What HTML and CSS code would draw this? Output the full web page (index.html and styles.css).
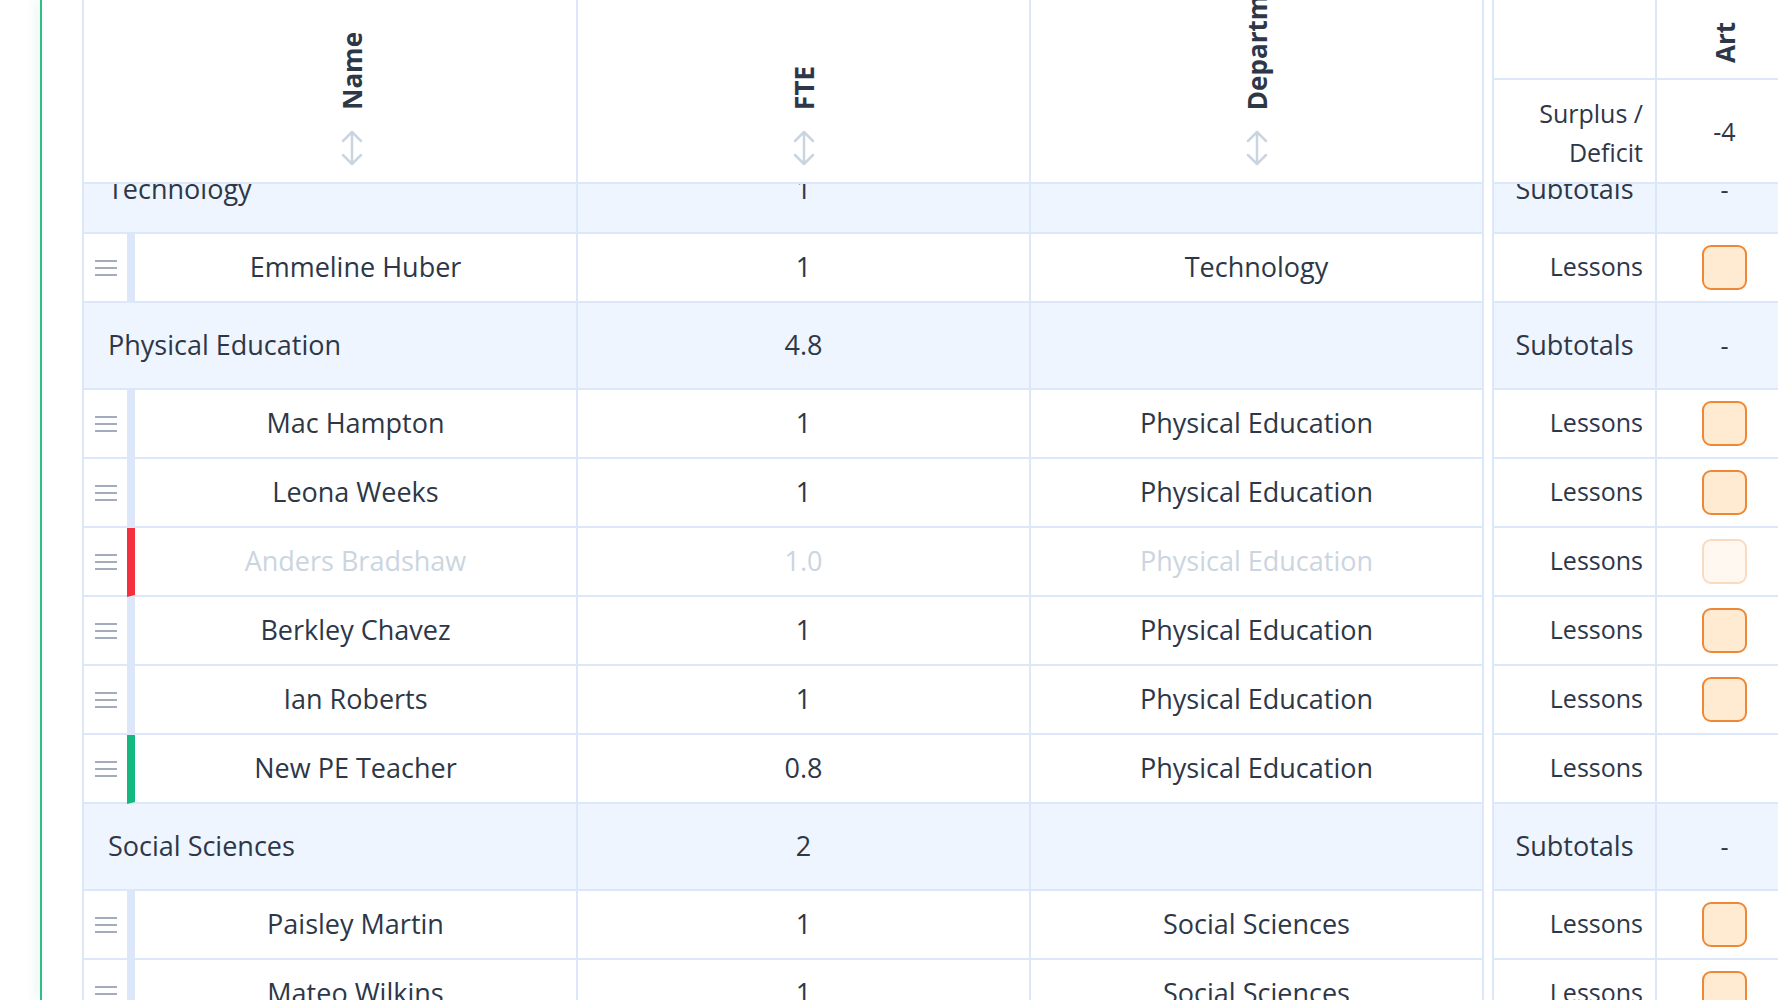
FILE: index.html
```html
<!DOCTYPE html>
<html lang="en">
<head>
    <meta charset="UTF-8" />
    <title>Staffing</title>
    <link rel="stylesheet" href="styles.css">
</head>
<body>
    <div class="page">
        <div class="drop-line"></div>

        <div class="board">
            <div class="head">
                <div class="head-cell handle-head"></div>
                <div class="head-cell sortable">
                    <span class="head-label">Name</span>
                    <svg class="sort-icon" width="22" height="36" viewBox="0 0 22 36"><path d="M11 2v32M2 11l9-9 9 9M2 25l9 9 9-9" /></svg>
                </div>
                <div class="head-cell sortable">
                    <span class="head-label">FTE</span>
                    <svg class="sort-icon" width="22" height="36" viewBox="0 0 22 36"><path d="M11 2v32M2 11l9-9 9 9M2 25l9 9 9-9" /></svg>
                </div>
                <div class="head-cell sortable">
                    <span class="head-label">Department</span>
                    <svg class="sort-icon" width="22" height="36" viewBox="0 0 22 36"><path d="M11 2v32M2 11l9-9 9 9M2 25l9 9 9-9" /></svg>
                </div>
                <div class="head-gap"></div>
                <div class="head-cell label-top"></div>
                <div class="head-cell subject-head"><span class="head-label">Art</span></div>
                <div class="head-cell label-total">Surplus /<br>Deficit</div>
                <div class="head-cell value-total">-4</div>
            </div>

            <div class="rows">
                <div class="rows-inner">
                    <div class="row group">
                        <div class="cell group-name">Technology</div>
                        <div class="cell fte">1</div>
                        <div class="cell dept"></div>
                        <div class="gap"></div>
                        <div class="cell label subtotal">Subtotals</div>
                        <div class="cell art">-</div>
                    </div>
                    <div class="row">
                        <div class="cell handle"><svg width="22" height="16" viewBox="0 0 22 16"><path d="M0 1h22M0 8h22M0 15h22" /></svg></div>
                        <div class="cell name">Emmeline Huber</div>
                        <div class="cell fte">1</div>
                        <div class="cell dept">Technology</div>
                        <div class="gap"></div>
                        <div class="cell label">Lessons</div>
                        <div class="cell art"><span class="lesson-box"></span></div>
                    </div>

                    <div class="row group">
                        <div class="cell group-name">Physical Education</div>
                        <div class="cell fte">4.8</div>
                        <div class="cell dept"></div>
                        <div class="gap"></div>
                        <div class="cell label subtotal">Subtotals</div>
                        <div class="cell art">-</div>
                    </div>
                    <div class="row">
                        <div class="cell handle"><svg width="22" height="16" viewBox="0 0 22 16"><path d="M0 1h22M0 8h22M0 15h22" /></svg></div>
                        <div class="cell name">Mac Hampton</div>
                        <div class="cell fte">1</div>
                        <div class="cell dept">Physical Education</div>
                        <div class="gap"></div>
                        <div class="cell label">Lessons</div>
                        <div class="cell art"><span class="lesson-box"></span></div>
                    </div>
                    <div class="row">
                        <div class="cell handle"><svg width="22" height="16" viewBox="0 0 22 16"><path d="M0 1h22M0 8h22M0 15h22" /></svg></div>
                        <div class="cell name">Leona Weeks</div>
                        <div class="cell fte">1</div>
                        <div class="cell dept">Physical Education</div>
                        <div class="gap"></div>
                        <div class="cell label">Lessons</div>
                        <div class="cell art"><span class="lesson-box"></span></div>
                    </div>
                    <div class="row leaving">
                        <div class="cell handle"><svg width="22" height="16" viewBox="0 0 22 16"><path d="M0 1h22M0 8h22M0 15h22" /></svg></div>
                        <div class="cell name">Anders Bradshaw</div>
                        <div class="cell fte">1.0</div>
                        <div class="cell dept">Physical Education</div>
                        <div class="gap"></div>
                        <div class="cell label">Lessons</div>
                        <div class="cell art"><span class="lesson-box"></span></div>
                    </div>
                    <div class="row">
                        <div class="cell handle"><svg width="22" height="16" viewBox="0 0 22 16"><path d="M0 1h22M0 8h22M0 15h22" /></svg></div>
                        <div class="cell name">Berkley Chavez</div>
                        <div class="cell fte">1</div>
                        <div class="cell dept">Physical Education</div>
                        <div class="gap"></div>
                        <div class="cell label">Lessons</div>
                        <div class="cell art"><span class="lesson-box"></span></div>
                    </div>
                    <div class="row">
                        <div class="cell handle"><svg width="22" height="16" viewBox="0 0 22 16"><path d="M0 1h22M0 8h22M0 15h22" /></svg></div>
                        <div class="cell name">Ian Roberts</div>
                        <div class="cell fte">1</div>
                        <div class="cell dept">Physical Education</div>
                        <div class="gap"></div>
                        <div class="cell label">Lessons</div>
                        <div class="cell art"><span class="lesson-box"></span></div>
                    </div>
                    <div class="row new">
                        <div class="cell handle"><svg width="22" height="16" viewBox="0 0 22 16"><path d="M0 1h22M0 8h22M0 15h22" /></svg></div>
                        <div class="cell name">New PE Teacher</div>
                        <div class="cell fte">0.8</div>
                        <div class="cell dept">Physical Education</div>
                        <div class="gap"></div>
                        <div class="cell label">Lessons</div>
                        <div class="cell art"></div>
                    </div>

                    <div class="row group">
                        <div class="cell group-name">Social Sciences</div>
                        <div class="cell fte">2</div>
                        <div class="cell dept"></div>
                        <div class="gap"></div>
                        <div class="cell label subtotal">Subtotals</div>
                        <div class="cell art">-</div>
                    </div>
                    <div class="row">
                        <div class="cell handle"><svg width="22" height="16" viewBox="0 0 22 16"><path d="M0 1h22M0 8h22M0 15h22" /></svg></div>
                        <div class="cell name">Paisley Martin</div>
                        <div class="cell fte">1</div>
                        <div class="cell dept">Social Sciences</div>
                        <div class="gap"></div>
                        <div class="cell label">Lessons</div>
                        <div class="cell art"><span class="lesson-box"></span></div>
                    </div>
                    <div class="row">
                        <div class="cell handle"><svg width="22" height="16" viewBox="0 0 22 16"><path d="M0 1h22M0 8h22M0 15h22" /></svg></div>
                        <div class="cell name">Mateo Wilkins</div>
                        <div class="cell fte">1</div>
                        <div class="cell dept">Social Sciences</div>
                        <div class="gap"></div>
                        <div class="cell label">Lessons</div>
                        <div class="cell art"><span class="lesson-box"></span></div>
                    </div>
                </div>
            </div>
        </div>
    </div>
</body>
</html>
```

FILE: styles.css
```css
* {
    box-sizing: border-box;
}

body {
    margin: 0;
    font-family: "Open Sans", Arial, sans-serif;
    font-size: 25px;
    color: #2d3748;
    background-color: #ffffff;
    overflow: hidden;
}

.page {
    display: flex;
    height: 100vh;
    padding-left: 40px;
}

/* green drop marker on the left edge */
.drop-line {
    width: 2px;
    flex-shrink: 0;
    background-color: #2fbf86;
    box-shadow: -4px 0 8px rgba(47, 191, 134, 0.3);
}

.board {
    margin-left: 40px;
    display: flex;
    flex-direction: column;
    flex-shrink: 0;
    height: 100%;
}

.head,
.row {
    display: grid;
    grid-template-columns: 45px 451px 453px 453px 8px 165px 137px;
}

/* header */
.head {
    grid-template-rows: 80px 104px;
    flex-shrink: 0;
}

.head-cell {
    border-bottom: 2px solid #dce7f9;
    background-color: #ffffff;
}

.handle-head {
    grid-row: span 2;
    border-left: 2px solid #dce7f9;
}

.sortable {
    grid-row: span 2;
    border-right: 2px solid #dce7f9;
    display: flex;
    flex-direction: column;
    align-items: center;
    justify-content: flex-end;
    gap: 20px;
    padding-bottom: 16px;
}

.sortable > * {
    flex-shrink: 0;
}

.head-gap {
    grid-row: span 2;
}

.head-label {
    writing-mode: vertical-rl;
    transform: rotate(180deg);
    white-space: nowrap;
    font-weight: 700;
    font-size: 26px;
    line-height: 1;
}

.sort-icon path {
    fill: none;
    stroke: #cbd5e0;
    stroke-width: 2.5;
    stroke-linecap: round;
    stroke-linejoin: round;
}

.label-top {
    border-left: 2px solid #dce7f9;
    border-right: 2px solid #dce7f9;
}

.subject-head {
    border-right: 2px solid #dce7f9;
    display: flex;
    flex-direction: column;
    align-items: center;
    justify-content: flex-end;
    padding-bottom: 15px;
}

.label-total {
    border-left: 2px solid #dce7f9;
    border-right: 2px solid #dce7f9;
    text-align: right;
    padding: 14px 12px 0 0;
    line-height: 39px;
}

.value-total {
    border-right: 2px solid #dce7f9;
    display: flex;
    align-items: center;
    justify-content: center;
}

/* body rows */
.rows {
    flex: 1;
    overflow: hidden;
}

/* list is scrolled a little under the header */
.rows-inner {
    margin-top: -37px;
}

.row {
    height: 69px;
}

.row.group {
    height: 87px;
}

.cell {
    display: flex;
    align-items: center;
    justify-content: center;
    border-bottom: 2px solid #dce7f9;
    border-right: 2px solid #dce7f9;
    padding-bottom: 3px;
    white-space: nowrap;
}

.group-name,
.name,
.fte,
.dept {
    font-size: 27px;
}

.gap {
    background-color: #ffffff;
}

.handle {
    border-right: none;
    border-left: 2px solid #dce7f9;
    padding-bottom: 0;
}

.handle path {
    stroke: #a3acbb;
    stroke-width: 2;
}

.name {
    border-left: 8px solid #dce7f9;
}

.leaving .name {
    border-left-color: #f5303e;
}

.new .name {
    border-left-color: #13b981;
}

.leaving .name,
.leaving .fte,
.leaving .dept {
    color: #cbd5e0;
}

.label {
    border-left: 2px solid #dce7f9;
    justify-content: flex-end;
    padding-right: 12px;
}

.label.subtotal {
    justify-content: center;
    padding-right: 0;
    font-size: 27px;
}

.art {
    padding-bottom: 1px;
}

/* group rows */
.group .cell {
    background-color: #eef5fe;
}

.group-name {
    grid-column: span 2;
    border-left: 2px solid #dce7f9;
    justify-content: flex-start;
    padding-left: 24px;
}

.lesson-box {
    width: 45px;
    height: 45px;
    border: 2px solid #ed8936;
    border-radius: 9px;
    background-color: #feebd2;
}

.leaving .lesson-box {
    opacity: 0.3;
}
```
